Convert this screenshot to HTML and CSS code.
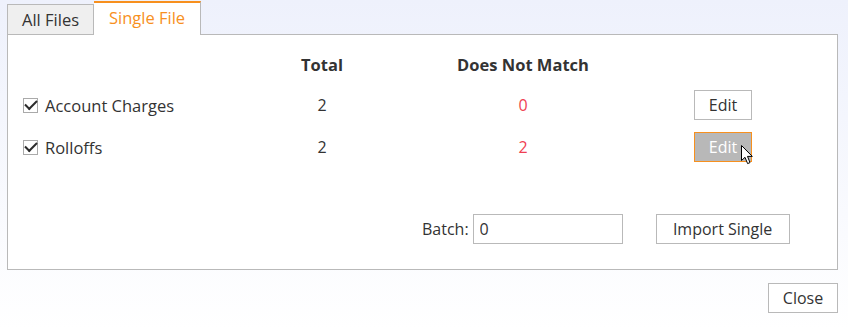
FILE: index.html
```html
<!DOCTYPE html>
<html lang="en">
<head>
    <meta charset="UTF-8">
    <title>Import Files</title>
    <link rel="stylesheet" href="styles.css">
</head>
<body>
    <div class="dialog">
        <div class="tabs">
            <div class="tab">All Files</div>
            <div class="tab active">Single File</div>
        </div>
        <div class="panel">
            <div class="grid">
                <div></div>
                <div class="head">Total</div>
                <div class="head">Does Not Match</div>
                <div></div>

                <label class="name"><span class="check"></span>Account Charges</label>
                <div class="num">2</div>
                <div class="num bad">0</div>
                <div class="act"><button class="btn">Edit</button></div>

                <label class="name"><span class="check"></span>Rolloffs</label>
                <div class="num">2</div>
                <div class="num bad">2</div>
                <div class="act">
                    <span class="hoverwrap">
                        <button class="btn hover">Edit</button>
                        <svg class="cursor" width="13" height="20" viewBox="0 0 13 20">
                            <path d="M0.5 0.5 L0.5 15.5 L4 12.3 L6.6 18.6 L9 17.6 L6.5 11.4 L11.3 11.4 Z" fill="#fff" stroke="#000" stroke-width="1" stroke-linejoin="round"/>
                        </svg>
                    </span>
                </div>
            </div>
            <div class="batch">
                <label>Batch:</label>
                <input type="text" value="0">
                <button class="btn import">Import Single</button>
            </div>
        </div>
        <div class="footer">
            <button class="btn">Close</button>
        </div>
    </div>
</body>
</html>
```

FILE: styles.css
```css
html, body {
    height: 100%;
}
body {
    margin: 0;
    font-family: "Open Sans", "Noto Sans", sans-serif;
    font-size: 16px;
    color: #333;
    background: linear-gradient(#eef1fc, #ffffff);
}
.dialog {
    padding: 1px 10px 0 7px;
}
.tabs {
    display: flex;
    align-items: flex-end;
    height: 33px;
}
.tab {
    width: 87px;
    height: 30px;
    line-height: 30px;
    text-align: center;
    background: #efefef;
    border: 1px solid #b9b9b9;
    border-bottom: none;
    color: #333;
    font-size: 16.5px;
    box-sizing: border-box;
}
.tab.active {
    width: 107px;
    height: 34px;
    line-height: 30px;
    margin-bottom: -1px;
    background: #fff;
    color: #f7901e;
    border-top: 2px solid #f7901e;
    border-left: none;
    position: relative;
    z-index: 1;
}
.panel {
    background: #fff;
    border: 1px solid #b9b9b9;
    height: 236px;
    box-sizing: border-box;
}
.grid {
    display: grid;
    grid-template-columns: 248px 102px 300px 100px;
    grid-template-rows: 40px 42px 42px;
    align-items: center;
    padding: 9px 0 0 15px;
}
.head {
    text-align: center;
    font-weight: bold;
    font-size: 16.5px;
}
.name {
    display: flex;
    align-items: center;
    font-size: 16.5px;
}
.check {
    width: 15px;
    height: 15px;
    border: 1px solid #aaa;
    box-sizing: border-box;
    margin-right: 7px;
    position: relative;
}
.check::after {
    content: "";
    position: absolute;
    left: 1px;
    top: 1px;
    width: 10px;
    height: 5px;
    border-left: 2.5px solid #2b2b2b;
    border-bottom: 2.5px solid #2b2b2b;
    transform: rotate(-45deg);
}
.num {
    text-align: center;
}
.bad {
    color: #ef3f52;
}
.act {
    display: flex;
    justify-content: center;
}
.btn {
    font-family: inherit;
    font-size: 16px;
    color: #333;
    background: #fff;
    border: 1px solid #b9b9b9;
    height: 30px;
    padding: 0;
    line-height: 28px;
}
.act .btn {
    width: 58px;
    display: block;
}
.btn.hover {
    background: #b8b8b8;
    border-color: #f7901e;
    color: #fff;
}
.hoverwrap {
    position: relative;
    display: block;
}
.cursor {
    position: absolute;
    left: 47px;
    top: 13px;
}
.batch {
    display: flex;
    align-items: center;
    padding: 46px 0 0 414px;
}
.batch label {
    margin-right: 4px;
}
.batch input {
    width: 150px;
    height: 30px;
    box-sizing: border-box;
    border: 1px solid #b9b9b9;
    font-family: inherit;
    font-size: 16px;
    color: #333;
    padding: 0 6px;
}
.import {
    margin-left: 33px;
    width: 134px;
}
.footer {
    display: flex;
    justify-content: flex-end;
    padding-top: 13px;
}
.footer .btn {
    width: 70px;
}
```
